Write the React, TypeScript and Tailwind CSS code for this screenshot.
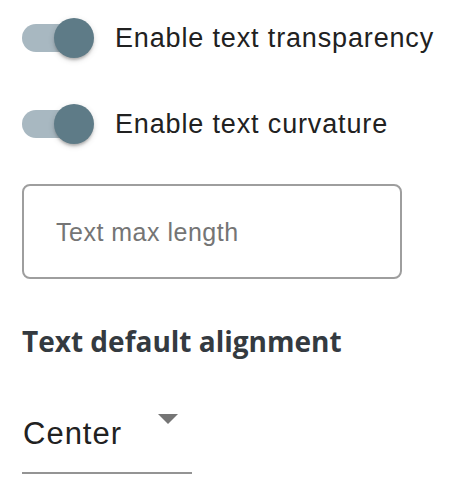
import React from "react";

function Toggle({ label }: { label: string }) {
  return (
    <div className="flex items-center h-[40px]">
      <div className="relative w-[72px] h-[40px] shrink-0">
        <div className="absolute left-0 top-[6px] w-[66px] h-[28px] rounded-full bg-[#a8b8c1]" />
        <div className="absolute left-[32px] top-0 w-[40px] h-[40px] rounded-full bg-[#5e7b87] shadow-[0_3px_3px_-1px_rgba(0,0,0,0.25),0_2px_6px_0_rgba(0,0,0,0.14)]" />
      </div>
      <span className="ml-[21px] text-[27px] leading-[30px] tracking-[0.85px] text-[#212121] font-['Liberation_Sans',Arial,sans-serif] whitespace-nowrap">
        {label}
      </span>
    </div>
  );
}

export default function App() {
  return (
    <div className="w-[458px] h-[496px] bg-white pl-[22px] flex flex-col overflow-hidden">
      <div className="mt-[18px]">
        <Toggle label="Enable text transparency" />
      </div>
      <div className="mt-[46px]">
        <Toggle label="Enable text curvature" />
      </div>
      <div className="mt-[40px] w-[380px] h-[95px] border-2 border-[#9e9e9e] rounded-[8px] flex items-center pl-[32px]">
        <span className="text-[25px] leading-[28px] text-[#757575] font-['Liberation_Sans',Arial,sans-serif] tracking-[0.5px]">
          Text max length
        </span>
      </div>
      <div className="mt-[48px] text-[28px] leading-[28px] font-bold text-[#343a40] font-['Open_Sans',sans-serif] whitespace-nowrap">
        Text default alignment
      </div>
      <div className="relative mt-[49px] w-[170px] pt-[15px] pb-[23px] border-b-2 border-[#949494]">
        <span className="block pl-[1px] text-[31px] leading-[30px] tracking-[1px] text-[#212121] font-['Liberation_Sans',Arial,sans-serif]">
          Center
        </span>
        <div className="absolute right-[14px] top-[10px] w-0 h-0 border-l-[10px] border-r-[10px] border-t-[10px] border-l-transparent border-r-transparent border-t-[#757575]" />
      </div>
    </div>
  );
}
